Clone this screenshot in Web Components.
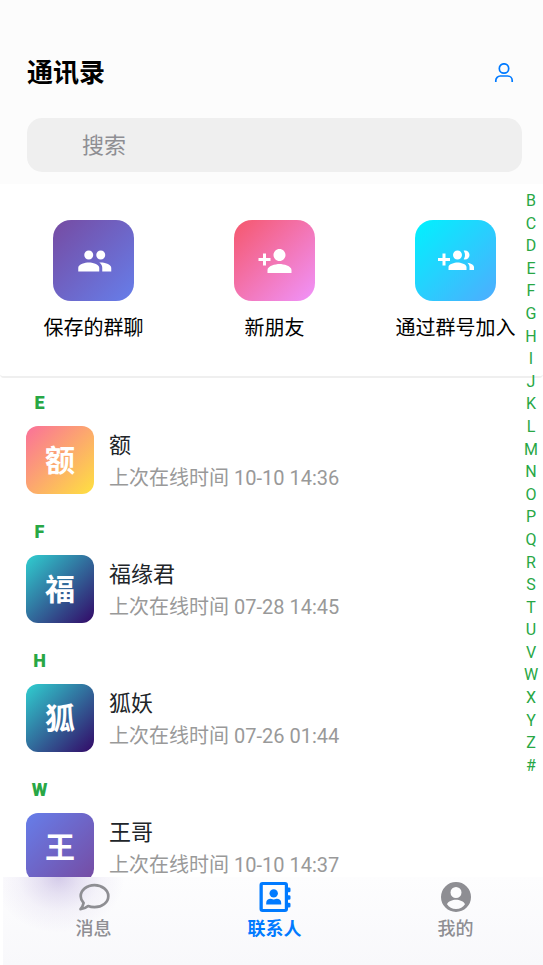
<!DOCTYPE html>
<html lang="zh-CN">
<head>
<meta charset="utf-8">
<meta name="viewport" content="width=device-width, initial-scale=1">
<title>通讯录</title>
<style>
html, body { height: 100%; margin: 0; background: #fff; }
body { font-family: Roboto, "Noto Sans CJK SC", sans-serif; color: #000; overflow: hidden; }
</style>
</head>
<body>
<contacts-app></contacts-app>
<script>
const define = (name, html, setup) => {
  const template = document.createElement('template');
  template.innerHTML = html;
  customElements.define(name, class extends HTMLElement {
    constructor() {
      super();
      this.attachShadow({ mode: 'open' }).append(template.content.cloneNode(true));
    }
    connectedCallback() { if (setup) setup(this, this.shadowRoot); }
  });
};

define('app-header', `
<style>
:host { display: block; background: #fcfcfc; padding: 56px 21px 12px 27px; }
.row { display: flex; align-items: center; justify-content: space-between; }
h1 { margin: 0; font-size: 26px; line-height: 34px; font-weight: 700; }
button { border: 0; background: none; padding: 0; width: 36px; height: 34px; display: grid; place-items: center; color: #007aff; }
svg { width: 20px; height: 20px; display: block; }
input { box-sizing: border-box; display: block; width: 100%; height: 54px; margin-top: 28px; padding: 0 55px; border: 0; border-radius: 15px; background: #efefef; font: 22px Roboto, "Noto Sans CJK SC", sans-serif; }
input::placeholder { color: #8e8e93; opacity: 1; }
</style>
<div class="row"><h1>通讯录</h1>
<button type="button" aria-label="个人资料"><svg viewBox="0 0 20 20" fill="none" stroke="currentColor" stroke-width="1.7"><circle cx="10" cy="5.500" r="4.700"/><path d="M1.800 19v-1.500a4.500 4.500 0 0 1 4.500-4.500h7.400a4.500 4.500 0 0 1 4.500 4.500V19"/></svg></button></div>
<input type="search" aria-label="搜索" placeholder="搜索">
`);

define('quick-action', `
<style>
:host { flex: 1 1 0; min-width: 0; display: block; }
button { width: 100%; border: 0; padding: 0; background: none; display: flex; flex-direction: column; align-items: center; gap: 12px; color: #000; font: 20px/30px Roboto, "Noto Sans CJK SC", sans-serif; white-space: nowrap; }
.tile { width: 81px; height: 81px; border-radius: 18px; background: var(--tile); display: grid; place-items: center; }
</style>
<button type="button"><span class="tile"><slot name="icon"></slot></span><slot></slot></button>
`);

define('contact-section', `
<style>
:host { display: block; height: 129px; }
h2 { margin: 0; padding-left: 26px; width: 27px; text-align: center; font-size: 18px; line-height: 24px; font-weight: 900; color: #28a745; }
a { display: flex; gap: 15px; padding: 11px 26px 0; text-decoration: none; color: #212529; }
.avatar { flex: none; width: 68px; height: 68px; border-radius: 12px; background: var(--avatar); color: #fff; font-size: 30px; line-height: 70px; font-weight: 700; text-align: center; }
.text { padding-top: 4px; }
.name { font-size: 22px; line-height: 32px; }
.seen { font-size: 20px; line-height: 32px; color: #999; }
</style>
<h2></h2>
<a href="#"><span class="avatar"></span><div class="text"><div class="name"></div><div class="seen"></div></div></a>
`, (host, root) => {
  root.querySelector('h2').textContent = host.getAttribute('letter');
  root.querySelector('.avatar').textContent = host.getAttribute('name')[0];
  root.querySelector('.name').textContent = host.getAttribute('name');
  root.querySelector('.seen').textContent = '上次在线时间 ' + host.getAttribute('seen');
});

define('letter-index', `
<style>
:host { display: flex; flex-direction: column; justify-content: space-between; align-items: center; }
a { font-size: 16px; line-height: 20px; color: #28a745; text-decoration: none; }
</style>`, (host, root) => {
  for (const letter of 'BCDEFGHIJKLMNOPQRSTUVWXYZ#') {
    const link = document.createElement('a');
    link.href = '#';
    link.textContent = letter;
    root.append(link);
  }
});

define('tab-item', `
<style>
:host { flex: 1 1 0; display: block; color: #8e8e93; }
:host([active]) { color: #007aff; }
a { display: flex; flex-direction: column; align-items: center; gap: 2px; padding-top: 4px; color: inherit; text-decoration: none; font-size: 18px; line-height: 28px; font-weight: 500; }
:host([active]) a { font-weight: 700; }
</style>
<a href="#"><slot name="icon"></slot><slot></slot></a>
`);

define('contacts-app', `
<style>
:host { display: flex; flex-direction: column; height: 100%; position: relative; }
.actions { border-bottom: 2px solid #efefef; border-radius: 0 0 4px 4px; padding: 36px 0 33px; }
.row { display: flex; margin: 0 -3px 0 3px; }
main { flex: 1 1 0; min-height: 0; overflow: hidden; padding-top: 13px; }
nav { display: flex; flex: none; height: 88px; margin: 0 -3px 0 3px; background: radial-gradient(ellipse 66px 56px at 56px 0, #8b72c45c, #8b72c433 30%, #8b72c412 62%, #8b72c400), linear-gradient(#fdfdfe, #f8f8fb); }
letter-index { position: absolute; top: 191px; bottom: 189px; right: 0; width: 24px; }
svg { display: block; fill: currentColor; }
quick-action svg { fill: #fff; }
</style>
<app-header></app-header>
<section class="actions"><div class="row">
<quick-action style="--tile:linear-gradient(135deg,#764ba2,#667eea)"><svg slot="icon" width="36" height="36" viewBox="0 0 24 24"><path d="M16.500 11c1.660 0 2.990-1.340 2.990-3s-1.330-3-2.990-3-3 1.340-3 3 1.340 3 3 3zM8.500 11c1.660 0 2.990-1.340 2.990-3S10.160 5 8.500 5s-3 1.340-3 3 1.340 3 3 3zm0 2C6.170 13 1.500 14.170 1.500 16.500V19h14v-2.500C15.500 14.170 10.830 13 8.500 13zm8 0c-.290 0-.620.020-.970.050 1.160.840 1.970 1.970 1.970 3.450V19h6v-2.500c0-2.330-4.670-3.500-7-3.500z"/></svg>保存的群聊</quick-action>
<quick-action style="--tile:linear-gradient(135deg,#f5576c,#f093fb)"><svg slot="icon" width="36" height="36" viewBox="0 0 24 24"><path d="M15 12c2.210 0 4-1.790 4-4s-1.790-4-4-4-4 1.790-4 4 1.790 4 4 4zm-9-2V7H4v3H1v2h3v3h2v-3h3v-2H6zm9 4c-2.670 0-8 1.340-8 4v2h16v-2c0-2.660-5.330-4-8-4z"/></svg>新朋友</quick-action>
<quick-action style="--tile:linear-gradient(135deg,#00f2fe,#4facfe)"><svg slot="icon" width="36" height="36" viewBox="0 0 24 24"><path d="M8 10H5V7H3v3H0v2h3v3h2v-3h3v-2zm10 1c1.660 0 2.990-1.340 2.990-3S19.660 5 18 5c-.320 0-.630.050-.910.140.570.810.900 1.790.900 2.860s-.340 2.040-.900 2.860c.280.090.590.140.910.140zm-5 0c1.660 0 2.990-1.340 2.990-3S14.660 5 13 5s-3 1.340-3 3 1.340 3 3 3zm6.620 2.160c.830.730 1.380 1.660 1.380 2.840v2h3v-2c0-1.540-2.370-2.490-4.380-2.840zM13 13c-2 0-6 1-6 3v2h12v-2c0-2-4-3-6-3z"/></svg>通过群号加入</quick-action>
</div></section>
<main>
<contact-section letter="E" name="额" seen="10-10 14:36" style="--avatar:linear-gradient(135deg,#fa709a,#fee140)"></contact-section>
<contact-section letter="F" name="福缘君" seen="07-28 14:45" style="--avatar:linear-gradient(135deg,#30cfd0,#330867)"></contact-section>
<contact-section letter="H" name="狐妖" seen="07-26 01:44" style="--avatar:linear-gradient(135deg,#30cfd0,#330867)"></contact-section>
<contact-section letter="W" name="王哥" seen="10-10 14:37" style="--avatar:linear-gradient(135deg,#667eea,#764ba2)"></contact-section>
</main>
<nav aria-label="主导航">
<tab-item><svg slot="icon" width="32" height="32" viewBox="0 0 32 32"><path d="M16.500 4.200c7.700 0 13.800 4.900 13.800 11s-6.100 11-13.800 11c-2.300 0-4.500-.400-6.400-1.200-2 1.700-4.600 3-7.600 3.200 1.600-1.900 2.700-4 3.100-6.200-1.800-1.900-2.900-4.200-2.900-6.800 0-6.100 6.100-11 13.800-11z" fill="none" stroke="currentColor" stroke-width="2.700" stroke-linejoin="round"/></svg>消息</tab-item>
<tab-item active><svg slot="icon" width="32" height="32" viewBox="0 0 32 32"><path fill-rule="evenodd" d="M3.500 1H26q3 0 3 3v2.500h1q1.500 0 1.500 1.200V10q0 1.200-1.500 1.200h-1v3h1q1.500 0 1.500 1.200v2.200q0 1.200-1.500 1.200h-1v3h1q1.500 0 1.500 1.200v2.200q0 1.200-1.500 1.200h-1V28q0 3-3 3H3.500q-3 0-3-3V4q0-3 3-3zm.300 3v24h22V4z"/><circle cx="14.700" cy="12.400" r="4.200"/><path d="M7.200 23.500V22c0-3 2-4.200 4.500-4.200l3 .600 3-.600c2.500 0 4.500 1.200 4.500 4.200v1.500z"/></svg>联系人</tab-item>
<tab-item><svg slot="icon" width="32" height="32" viewBox="0 0 32 32"><path fill-rule="evenodd" d="M16 1a15 15 0 1 0 0 30 15 15 0 0 0 0-30zm0 5a5.500 5.500 0 1 1 0 11 5.500 5.500 0 0 1 0-11zm0 22c-4 0-7-2-9-4.800 1-2.800 5.500-4.400 9-4.400s8 1.600 9 4.400c-2 2.800-5 4.800-9 4.800z"/></svg>我的</tab-item>
</nav>
<letter-index></letter-index>
`);
</script>
</body>
</html>
